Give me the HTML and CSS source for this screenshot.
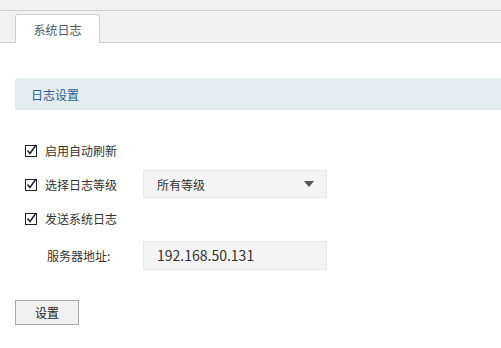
FILE: index.html
```html
<!DOCTYPE html>
<html lang="zh-CN">
<head>
<meta charset="UTF-8">
<meta name="viewport" content="width=device-width, initial-scale=1.0">
<title>系统日志</title>
<link rel="stylesheet" href="styles.css">
</head>
<body>

<div class="topbar"></div>
<div class="tabbar">
  <div class="tab">系统日志</div>
</div>

<div class="content">
  <div class="section-title">日志设置</div>

  <div class="form">
    <div class="row">
      <span class="check"><svg width="13" height="13" viewBox="0 0 13 13"><rect x="0.5" y="1.5" width="11" height="11" fill="#fff" stroke="#222"/><path d="M2.5 6.5 L5 9.5 L11 1" fill="none" stroke="#222" stroke-width="1.5"/></svg></span>
      <span class="label">启用自动刷新</span>
    </div>
    <div class="row">
      <span class="check"><svg width="13" height="13" viewBox="0 0 13 13"><rect x="0.5" y="1.5" width="11" height="11" fill="#fff" stroke="#222"/><path d="M2.5 6.5 L5 9.5 L11 1" fill="none" stroke="#222" stroke-width="1.5"/></svg></span>
      <span class="label">选择日志等级</span>
      <div class="select">
        <span>所有等级</span>
        <span class="arrow"></span>
      </div>
    </div>
    <div class="row">
      <span class="check"><svg width="13" height="13" viewBox="0 0 13 13"><rect x="0.5" y="1.5" width="11" height="11" fill="#fff" stroke="#222"/><path d="M2.5 6.5 L5 9.5 L11 1" fill="none" stroke="#222" stroke-width="1.5"/></svg></span>
      <span class="label">发送系统日志</span>
    </div>
    <div class="row row-server">
      <span class="label label-server">服务器地址:</span>
      <div class="input">192.168.50.131</div>
    </div>
  </div>

  <button class="btn">设置</button>
</div>

</body>
</html>
```

FILE: styles.css
```css
body {
  margin: 0;
  font-family: "Noto Sans CJK SC", "Noto Sans", sans-serif;
  font-size: 12px;
  color: #333;
  background-color: #fff;
}
.topbar {
  height: 10px;
  background-color: #f1f1f1;
  border-bottom: 1px solid #cfcfcf;
}
.tabbar {
  height: 28px;
  padding: 3px 0 0 15px;
  background-color: #f2f2f2;
  border-bottom: 1px solid #cfcfcf;
  display: flex;
  align-items: flex-end;
}
.tab {
  width: 83px;
  height: 28px;
  margin-bottom: -1px;
  background-color: #fff;
  border: 1px solid #cfcfcf;
  border-bottom: none;
  border-radius: 3px 3px 0 0;
  display: flex;
  align-items: center;
  justify-content: center;
  color: #4a5a6a;
}
.content {
  padding: 35px 0 0 15px;
}
.section-title {
  height: 32px;
  padding-left: 16px;
  background-color: #e4ecef;
  border-radius: 2px 0 0 2px;
  display: flex;
  align-items: center;
  color: #2a5f8e;
}
.form {
  padding-top: 23px;
}
.row {
  height: 34px;
  display: flex;
  align-items: center;
  padding-left: 10px;
}
.check {
  width: 13px;
  height: 13px;
  margin-right: 7px;
  display: flex;
}
.label {
  width: 98px;
}
.select, .input {
  width: 169px;
  height: 26px;
  padding-left: 13px;
  background-color: #f4f4f4;
  border: 1px solid #e8e8e8;
  display: flex;
  align-items: center;
}
.select {
  justify-content: space-between;
}
.arrow {
  width: 0;
  height: 0;
  margin-right: 12px;
  border-left: 5px solid transparent;
  border-right: 5px solid transparent;
  border-top: 6px solid #555;
}
.row-server {
  height: 36px;
  margin-top: 2px;
  padding-left: 32px;
}
.label-server {
  width: 96px;
}
.input {
  height: 27px;
  font-size: 14px;
}
.btn {
  margin-top: 27px;
  width: 64px;
  height: 25px;
  padding: 0;
  font-family: inherit;
  font-size: 12px;
  color: #222;
  background-color: #f0f0f0;
  border: 1px solid #aaa;
}
```
